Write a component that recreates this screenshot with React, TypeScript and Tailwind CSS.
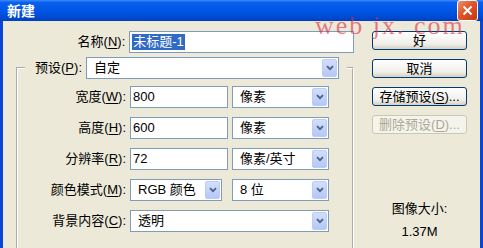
import React from 'react';

const FONT = "font-['Liberation_Sans','Noto_Sans_CJK_SC',sans-serif]";

function Key({ label, k, tail = '' }: { label: string; k: string; tail?: string }) {
  return (
    <>
      {label}(<span className="underline underline-offset-[2px]">{k}</span>){tail}
    </>
  );
}

function Arrow() {
  return (
    <div className="m-[1px] flex w-[15px] items-center justify-center self-stretch rounded-[2px] border border-[#bccdf5] bg-[linear-gradient(#d3defa,#b4c7f6)]">
      <svg width="8" height="6" viewBox="0 0 8 6">
        <path d="M1 1.2 4 4.2 7 1.2" fill="none" stroke="#4d6185" strokeWidth="1.8" />
      </svg>
    </div>
  );
}

function Combo({ value, w }: { value: string; w: string }) {
  return (
    <div className={`flex h-[22px] items-stretch border border-[#7f9db9] bg-white ${w}`}>
      <span className="flex flex-1 items-center pl-[7px]">{value}</span>
      <Arrow />
    </div>
  );
}

function Field({ value, w }: { value: string; w: string }) {
  return (
    <div className={`flex h-[22px] items-center border border-[#7f9db9] bg-white pl-[2px] ${w}`}>
      {value}
    </div>
  );
}

function Row({ label, children }: { label: React.ReactNode; children: React.ReactNode }) {
  return (
    <div className="flex items-center">
      <span className="w-[108px] text-right">{label}</span>
      <div className="ml-[4px] flex gap-[4px]">{children}</div>
    </div>
  );
}

function Btn({ children, disabled }: { children: React.ReactNode; disabled?: boolean }) {
  return (
    <button
      className={
        disabled
          ? 'flex h-[19px] items-center justify-center rounded-[3px] border border-[#c9c7ba] bg-[#f5f4ea] text-[#aca899]'
          : 'flex h-[19px] items-center justify-center rounded-[3px] border border-[#003c74] bg-[linear-gradient(#ffffff,#f0efe9_70%,#d6d0c5)] text-black'
      }
    >
      {children}
    </button>
  );
}

export default function App() {
  return (
    <div className={`relative flex h-[248px] w-[483px] flex-col overflow-hidden bg-[#0a46d6] text-[13px] leading-[16px] text-black ${FONT}`}>
      {/* title bar */}
      <div className="flex h-[29px] items-center bg-[linear-gradient(#3b8cfb,#0a5ff0_12%,#0054e3_55%,#0049d2_85%,#003fb8)] pl-[7px] pr-[5px]">
        <span className="text-[14px] font-bold text-white">新建</span>
        <div className="ml-auto flex h-[21px] w-[21px] items-center justify-center rounded-[3px] border border-white bg-[linear-gradient(135deg,#f0906c,#e0552a_45%,#c23a12)]">
          <svg width="11" height="11" viewBox="0 0 11 11">
            <path d="M1.5 1.5 9.5 9.5M9.5 1.5 1.5 9.5" stroke="#fff" strokeWidth="2" />
          </svg>
        </div>
      </div>

      {/* body */}
      <div className="mx-[3px] flex flex-1 bg-[#ece9d8]">
        <div className="w-[351px]">
          <div className="mt-[10px] flex items-center">
            <span className="w-[123px] text-right">
              <Key label="名称" k="N" tail=":" />
            </span>
            <div className="ml-[4px] flex h-[22px] w-[226px] items-center border border-[#7f9db9] bg-white pl-[2px]">
              <span className="bg-[#316ac5] px-[1px] text-white">未标题-1</span>
            </div>
          </div>

          <fieldset className="ml-[13px] mt-[4px] w-[338px] border-2 border-white p-0 pb-[20px] [border-style:groove]">
            <legend className="ml-[7px] p-0">
              <div className="flex items-center">
                <span className="w-[57px] text-right">
                  <Key label="预设" k="P" tail=":" />
                </span>
                <div className="ml-[4px] mr-[8px]">
                  <Combo value="自定" w="w-[253px]" />
                </div>
              </div>
            </legend>
            <div className="mt-[7px] flex flex-col gap-[9px]">
              <Row label={<Key label="宽度" k="W" tail=":" />}>
                <Field value="800" w="w-[98px]" />
                <Combo value="像素" w="w-[97px]" />
              </Row>
              <Row label={<Key label="高度" k="H" tail=":" />}>
                <Field value="600" w="w-[98px]" />
                <Combo value="像素" w="w-[97px]" />
              </Row>
              <Row label={<Key label="分辨率" k="R" tail=":" />}>
                <Field value="72" w="w-[98px]" />
                <Combo value="像素/英寸" w="w-[97px]" />
              </Row>
              <Row label={<Key label="颜色模式" k="M" tail=":" />}>
                <Combo value="RGB 颜色" w="w-[92px]" />
                <div className="ml-[6px]">
                  <Combo value="8 位" w="w-[97px]" />
                </div>
              </Row>
              <Row label={<Key label="背景内容" k="C" tail=":" />}>
                <Combo value="透明" w="w-[199px]" />
              </Row>
            </div>
          </fieldset>
        </div>

        <div className="ml-[18px] flex w-[95px] flex-col pt-[10px]">
          <div className="flex flex-col gap-[9px]">
            <Btn>好</Btn>
            <Btn>取消</Btn>
            <Btn>
              存储预设(<span className="underline underline-offset-[2px]">S</span>)...
            </Btn>
            <Btn disabled>
              删除预设(<span className="underline underline-offset-[2px]">D</span>)...
            </Btn>
          </div>
          <div className="mt-[67px] text-center">图像大小:</div>
          <div className="mt-[7px] text-center">1.37M</div>
        </div>
      </div>

      {/* watermark */}
      <div className="pointer-events-none absolute left-[315px] top-[16px] font-['Liberation_Serif',serif] text-[26px] leading-[20px] tracking-[2px] text-[rgba(220,40,65,0.6)]">
        web jx. com
      </div>
    </div>
  );
}
